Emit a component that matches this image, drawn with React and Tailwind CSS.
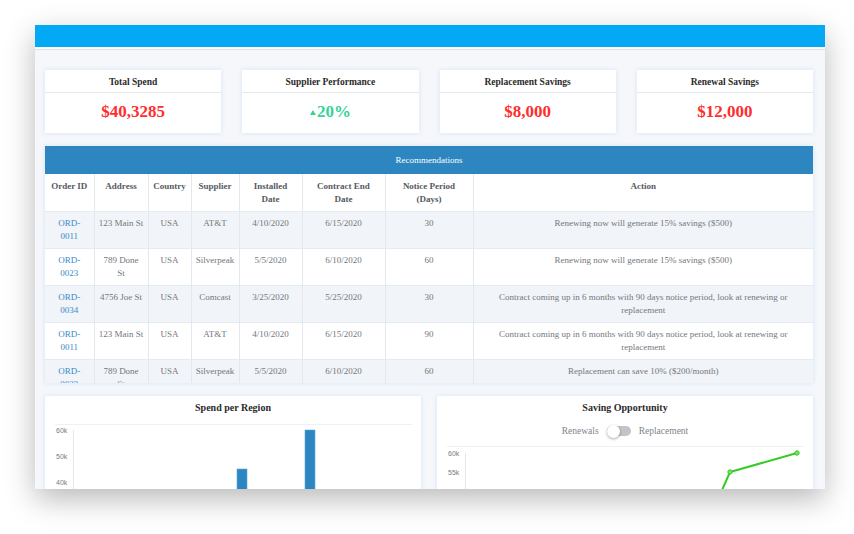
import React from "react";

const cards = [
  { title: "Total Spend", value: "$40,3285", color: "text-[#ff2e2e]" },
  { title: "Supplier Performance", value: "20%", color: "text-[#36d398]", up: true },
  { title: "Replacement Savings", value: "$8,000", color: "text-[#ff2e2e]" },
  { title: "Renewal Savings", value: "$12,000", color: "text-[#ff2e2e]" },
];

const cols = [
  { w: 49, h: ["Order ID"] },
  { w: 54, h: ["Address"] },
  { w: 43, h: ["Country"] },
  { w: 48, h: ["Supplier"] },
  { w: 63, h: ["Installed", "Date"] },
  { w: 83, h: ["Contract End", "Date"] },
  { w: 88, h: ["Notice Period", "(Days)"] },
  { w: 340, h: ["Action"] },
];

const rows = [
  [["ORD-", "0011"], ["123 Main St"], ["USA"], ["AT&T"], ["4/10/2020"], ["6/15/2020"], ["30"], ["Renewing now will generate 15% savings ($500)"]],
  [["ORD-", "0023"], ["789 Done", "St"], ["USA"], ["Silverpeak"], ["5/5/2020"], ["6/10/2020"], ["60"], ["Renewing now will generate 15% savings ($500)"]],
  [["ORD-", "0034"], ["4756 Joe St"], ["USA"], ["Comcast"], ["3/25/2020"], ["5/25/2020"], ["30"], ["Contract coming up in 6 months with 90 days notice period, look at renewing or", "replacement"]],
  [["ORD-", "0011"], ["123 Main St"], ["USA"], ["AT&T"], ["4/10/2020"], ["6/15/2020"], ["90"], ["Contract coming up in 6 months with 90 days notice period, look at renewing or", "replacement"]],
  [["ORD-", "0023"], ["789 Done", "St"], ["USA"], ["Silverpeak"], ["5/5/2020"], ["6/10/2020"], ["60"], ["Replacement can save 10% ($200/month)"]],
];

function Lines({ lines }) {
  return lines.map((l, i) => (
    <div key={i} className="whitespace-nowrap">
      {l}
    </div>
  ));
}

export default function App() {
  return (
    <div className="w-[854px] h-[534px] bg-white overflow-hidden pt-[25px] font-['Liberation_Serif','Times_New_Roman',serif]">
      <div className="ml-[35px] w-[790px] h-[464px] overflow-hidden bg-[#f5f7fb] shadow-[0_10px_28px_rgba(0,0,0,0.28)] flex flex-col">
        <div className="h-[22px] shrink-0 bg-[#03a9f4]" />
        <div className="h-[3px] shrink-0 bg-white border-b border-[#dde2ea]" />
        <div className="pl-[10px] pr-[12px] pt-[20px] flex flex-col">
          {/* KPI cards */}
          <div className="grid grid-cols-4 gap-[21px]">
            {cards.map((c) => (
              <div
                key={c.title}
                className="h-[63px] bg-white shadow-[0_0_5px_rgba(80,150,230,0.18)] flex flex-col"
              >
                <div className="h-[23px] pt-[2px] border-b border-[#e6e9ee] flex items-center justify-center text-[9.5px] font-bold text-[#2b2b2b]">
                  {c.title}
                </div>
                <div className={`flex-1 pb-[2px] flex items-center justify-center text-[17px] font-bold ${c.color}`}>
                  {c.up && (
                    <svg width="6" height="5" viewBox="0 0 6 5" className="mr-[1px]">
                      <polygon points="3,0 6,5 0,5" fill="#36d398" />
                    </svg>
                  )}
                  {c.value}
                </div>
              </div>
            ))}
          </div>

          {/* Recommendations table */}
          <div className="mt-[13px] h-[237px] overflow-hidden bg-white shadow-[0_0_5px_rgba(80,150,230,0.18)]">
            <div className="h-[28px] pt-[2px] bg-[#2d86bf] flex items-center justify-center text-[9px] text-white">
              Recommendations
            </div>
            <table className="table-fixed border-collapse w-[768px] text-[9px] leading-[13px]">
              <colgroup>
                {cols.map((c, i) => (
                  <col key={i} style={{ width: c.w }} />
                ))}
              </colgroup>
              <thead>
                <tr className="h-[37px] bg-white">
                  {cols.map((c, i) => (
                    <th
                      key={i}
                      className={`align-top pt-[6px] px-0 font-bold text-[#555a63] text-center ${
                        i < cols.length - 1 ? "border-r border-[#e3e8ef]" : ""
                      }`}
                    >
                      <Lines lines={c.h} />
                    </th>
                  ))}
                </tr>
              </thead>
              <tbody>
                {rows.map((r, ri) => (
                  <tr
                    key={ri}
                    className={`h-[37px] border-t border-[#e6ebf1] ${ri % 2 === 0 ? "bg-[#f1f4f8]" : "bg-white"}`}
                  >
                    {r.map((cell, ci) => (
                      <td
                        key={ci}
                        className={`align-top pt-[5px] px-0 text-center ${
                          ci === 0 ? "text-[#3a8ac8]" : "text-[#74777d]"
                        } ${ci < r.length - 1 ? "border-r border-[#e3e8ef]" : ""}`}
                      >
                        <Lines lines={cell} />
                      </td>
                    ))}
                  </tr>
                ))}
              </tbody>
            </table>
          </div>

          {/* Charts */}
          <div className="mt-[13px] grid grid-cols-2 gap-[16px]">
            <div className="h-[120px] bg-white shadow-[0_0_5px_rgba(80,150,230,0.18)] flex flex-col">
              <div className="pt-[6px] h-[28px] text-center text-[10px] leading-[12px] font-bold text-[#2b2b2b]">
                Spend per Region
              </div>
              <svg width="376" height="92" viewBox="0 28 376 92" className="block">
                <line x1="10" y1="28.5" x2="367" y2="28.5" stroke="#eef0f3" strokeWidth="1" />
                <line x1="28.5" y1="34" x2="28.5" y2="120" stroke="#e3e6ea" strokeWidth="1" />
                <g fontFamily='"Liberation Sans", Arial, sans-serif' fontSize="7" fill="#7a7d82">
                  <text x="11" y="36.5">60k</text>
                  <text x="11" y="62.5">50k</text>
                  <text x="11" y="88.5">40k</text>
                </g>
                <rect x="192" y="73" width="10" height="60" fill="#2e86c1" stroke="#5aa8df" strokeWidth="0.6" />
                <rect x="260" y="34" width="10" height="99" fill="#2e86c1" stroke="#5aa8df" strokeWidth="0.6" />
              </svg>
            </div>
            <div className="h-[120px] bg-white shadow-[0_0_5px_rgba(80,150,230,0.18)] flex flex-col">
              <div className="pt-[6px] h-[22px] text-center text-[10px] leading-[12px] font-bold text-[#2b2b2b]">
                Saving Opportunity
              </div>
              <div className="h-[29px] border-b border-[#eef0f3] mx-[10px] flex items-start justify-center pt-[6px] gap-[8px] text-[9.5px] leading-[14px] text-[#80848c]">
                <span>Renewals</span>
                <div className="relative w-[24px] h-[14px] flex items-center">
                  <div className="w-[24px] h-[10px] rounded-full bg-[#c4c4c4]" />
                  <div className="absolute left-0 top-[0.5px] w-[13px] h-[13px] rounded-full bg-white shadow-[0_1px_3px_rgba(0,0,0,0.35)]" />
                </div>
                <span>Replacement</span>
              </div>
              <svg width="376" height="69" viewBox="0 51 376 69" className="block">
                <line x1="28.5" y1="57" x2="28.5" y2="120" stroke="#e3e6ea" strokeWidth="1" />
                <g fontFamily='"Liberation Sans", Arial, sans-serif' fontSize="7" fill="#7a7d82">
                  <text x="11" y="59.5">60k</text>
                  <text x="11" y="78.5">55k</text>
                </g>
                <polyline
                  points="278,110 293,76 360,57"
                  fill="none"
                  stroke="#33cc22"
                  strokeWidth="2"
                  strokeLinejoin="round"
                />
                <circle cx="293" cy="76" r="2.2" fill="#7ee06a" stroke="#33cc22" strokeWidth="1" />
                <circle cx="360" cy="57" r="2.2" fill="#7ee06a" stroke="#33cc22" strokeWidth="1" />
              </svg>
            </div>
          </div>
        </div>
      </div>
    </div>
  );
}
